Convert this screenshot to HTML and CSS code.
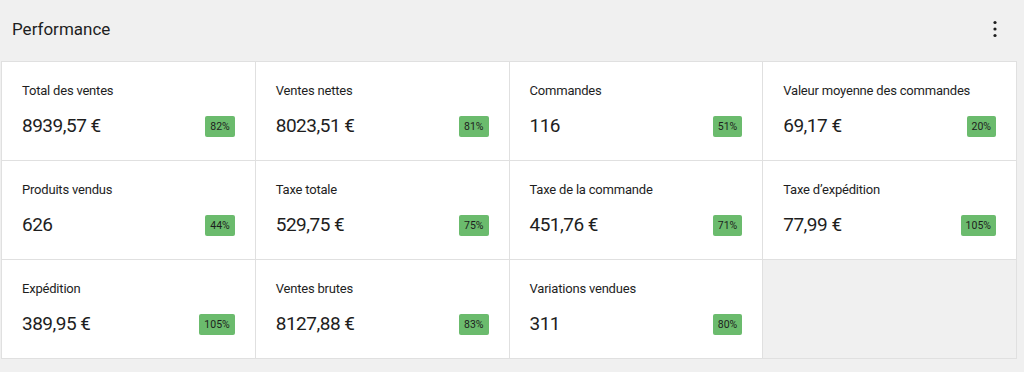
FILE: index.html
```html
<!DOCTYPE html>
<html lang="fr">
<head>
    <meta charset="UTF-8">
    <meta name="viewport" content="width=device-width, initial-scale=1.0">
    <title>Performance</title>
    <link rel="stylesheet" href="styles.css">
</head>
<body>
    <div class="section-header">
        <h2 class="section-title">Performance</h2>
        <button class="menu-btn" aria-label="Options">
            <svg viewBox="0 0 24 24" width="24" height="24"><circle cx="12" cy="5.5" r="1.6"/><circle cx="12" cy="12" r="1.6"/><circle cx="12" cy="18.5" r="1.6"/></svg>
        </button>
    </div>

    <div class="grid-wrap">
        <div class="perf-grid">
            <div class="stat">
                <div class="stat-label">Total des ventes</div>
                <div class="stat-row"><span class="stat-value">8939,57 €</span><span class="badge">82%</span></div>
            </div>
            <div class="stat">
                <div class="stat-label">Ventes nettes</div>
                <div class="stat-row"><span class="stat-value">8023,51 €</span><span class="badge">81%</span></div>
            </div>
            <div class="stat">
                <div class="stat-label">Commandes</div>
                <div class="stat-row"><span class="stat-value">116</span><span class="badge">51%</span></div>
            </div>
            <div class="stat">
                <div class="stat-label">Valeur moyenne des commandes</div>
                <div class="stat-row"><span class="stat-value">69,17 €</span><span class="badge">20%</span></div>
            </div>
            <div class="stat">
                <div class="stat-label">Produits vendus</div>
                <div class="stat-row"><span class="stat-value">626</span><span class="badge">44%</span></div>
            </div>
            <div class="stat">
                <div class="stat-label">Taxe totale</div>
                <div class="stat-row"><span class="stat-value">529,75 €</span><span class="badge">75%</span></div>
            </div>
            <div class="stat">
                <div class="stat-label">Taxe de la commande</div>
                <div class="stat-row"><span class="stat-value">451,76 €</span><span class="badge">71%</span></div>
            </div>
            <div class="stat">
                <div class="stat-label">Taxe d’expédition</div>
                <div class="stat-row"><span class="stat-value">77,99 €</span><span class="badge">105%</span></div>
            </div>
            <div class="stat">
                <div class="stat-label">Expédition</div>
                <div class="stat-row"><span class="stat-value">389,95 €</span><span class="badge">105%</span></div>
            </div>
            <div class="stat">
                <div class="stat-label">Ventes brutes</div>
                <div class="stat-row"><span class="stat-value">8127,88 €</span><span class="badge">83%</span></div>
            </div>
            <div class="stat">
                <div class="stat-label">Variations vendues</div>
                <div class="stat-row"><span class="stat-value">311</span><span class="badge">80%</span></div>
            </div>
            <div class="stat stat-empty"></div>
        </div>
    </div>
</body>
</html>
```

FILE: styles.css
```css
body {
    margin: 0;
    padding: 0;
    font-family: Roboto, 'Noto Sans', sans-serif;
    background: #f0f0f0;
    color: #1e1e1e;
}

.section-header {
    height: 61px;
    display: flex;
    align-items: center;
    justify-content: space-between;
    padding: 0 17px 0 12px;
}

.section-title {
    margin: 0 0 3px 0;
    font-size: 17px;
    font-weight: 400;
    color: #1e1e1e;
}

.menu-btn {
    background: none;
    border: none;
    padding: 0;
    width: 24px;
    height: 24px;
    margin-bottom: 3px;
    cursor: pointer;
    fill: #1e1e1e;
}

.grid-wrap {
    padding: 0 7px 0 1px;
}

.perf-grid {
    display: grid;
    grid-template-columns: repeat(4, 1fr);
    border-top: 1px solid #e0e0e0;
    border-left: 1px solid #e0e0e0;
}

.stat {
    background: #fff;
    border-right: 1px solid #e0e0e0;
    border-bottom: 1px solid #e0e0e0;
    padding: 20px 20px 22px 20px;
}

.stat-empty {
    background: #f0f0f0;
}

.stat-label {
    font-size: 13px;
    line-height: 18px;
    color: #1e1e1e;
    letter-spacing: -0.2px;
}

.stat-row {
    margin-top: 14px;
    display: flex;
    align-items: center;
    justify-content: space-between;
    height: 24px;
}

.stat-value {
    font-size: 19px;
    line-height: 24px;
    letter-spacing: -0.5px;
}

.badge {
    background: #6bbb6d;
    color: #1e1e1e;
    font-size: 10.5px;
    line-height: 21px;
    padding: 0 5px;
    border-radius: 2px;
}
```
